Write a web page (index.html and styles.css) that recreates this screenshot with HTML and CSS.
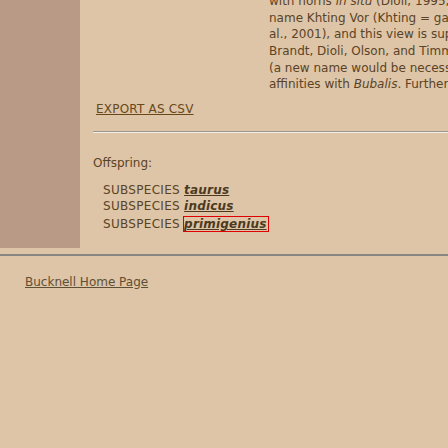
FILE: index.html
```
<!DOCTYPE html>
<html>
<head>
<meta charset="utf-8">
<link rel="stylesheet" href="styles.css">
</head>
<body>
<div class="layout">
  <div class="sidebar"></div>
  <div class="main">
    <div class="desc">
      <div>with horns <i>in situ</i> (Dioli, 1995; Hassanin and Ropiquet</div>
      <div>name Khting Vor (Khting = gaur, Vor = liana</div>
      <div>al., 2001), and this view is supported by others</div>
      <div>Brandt, Dioli, Olson, and Timm, 2005) who suggest</div>
      <div>(a new name would be necessary for the</div>
      <div>affinities with <i>Bubalis</i>. Further research</div>
    </div>
    <p class="export"><a href="#" class="plain-link">EXPORT AS CSV</a></p>
    <hr class="sep">
    <p class="label">Offspring:</p>
    <div class="children">
      <div class="child">SUBSPECIES <a href="#" class="taxon">taurus</a></div>
      <div class="child">SUBSPECIES <a href="#" class="taxon">indicus</a></div>
      <div class="child child-focus">SUBSPECIES <a href="#" class="taxon focused">primigenius</a></div>
    </div>
  </div>
</div>
<div class="rule"></div>
<p class="footer"><a href="#" class="home-link">Bucknell Home Page</a></p>
</body>
</html>
```
FILE: styles.css
```
html, body {
  margin: 0;
  padding: 0;
  background: #dec5a7;
}
body {
  font-family: "DejaVu Sans", Verdana, sans-serif;
  font-size: 12px;
  color: #5a4325;
  overflow: hidden;
}
.layout {
  display: grid;
  grid-template-columns: 80px 1fr;
}
.sidebar {
  background: #b99a86;
}
.main {
  padding: 0 0 15px 13px;
  overflow: hidden;
}
.desc {
  margin: -7px 0 0 176px;
  line-height: 16.67px;
  white-space: nowrap;
  overflow: hidden;
  color: #5a4326;
}
.export {
  margin: 9px 0 0 3px;
  line-height: 14px;
  letter-spacing: 0.2px;
}
.plain-link {
  color: #684819;
}
.sep {
  margin: 15px 0 0 0;
  height: 0;
  border: none;
  border-top: 1px solid #9c9890;
  border-bottom: 1px solid #f0ece6;
}
.label {
  margin: 23px 0 0 0;
  line-height: 14px;
}
.children {
  margin-top: 13px;
  padding-left: 10px;
  line-height: 15.5px;
  letter-spacing: 0.3px;
}
.taxon {
  color: #4c3a1f;
  font-weight: bold;
  font-style: italic;
  letter-spacing: 0.2px;
}
.child-focus {
  margin-top: 2px;
}
.focused {
  display: inline-block;
  line-height: 14px;
  border: 1px solid #e00000;
  padding: 0 1px 0 0;
  margin-left: -1px;
}
.rule {
  margin-top: 6px;
  height: 2px;
  background: #888682;
}
.footer {
  margin: 19px 0 0 25px;
  line-height: 14px;
}
.home-link {
  color: #5f4f35;
}
```
